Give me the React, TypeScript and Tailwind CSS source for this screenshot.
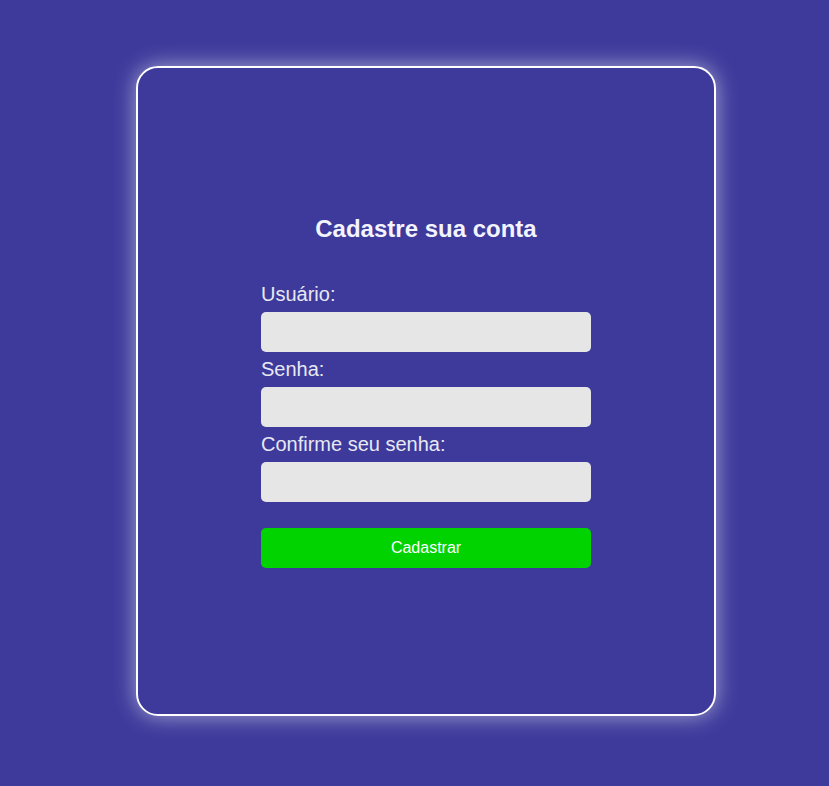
export default function App() {
  const fields = ['Usuário:', 'Senha:', 'Confirme seu senha:'];

  return (
    <div className="min-h-screen bg-[#3d3a9c] pt-[66px] pl-[136px] font-['Liberation_Sans',Arial,sans-serif]">
      <div className="w-[580px] h-[650px] border-2 border-white rounded-[22px] shadow-[0_0_22px_rgba(255,255,255,0.55)] flex flex-col items-center justify-center">
        <h2 className="text-[24px] leading-[28px] font-bold text-[#f4f4ff] mb-[40px]">Cadastre sua conta</h2>
        <form className="w-[330px] flex flex-col" onSubmit={(e) => e.preventDefault()}>
          {fields.map((label, i) => (
            <div key={label} className={`flex flex-col ${i > 0 ? 'mt-[6px]' : ''}`}>
              <label className="text-[20px] leading-[23px] text-[#e8e8f2]">{label}</label>
              <input
                type={i === 0 ? 'text' : 'password'}
                className="mt-[6px] h-[40px] w-full rounded-[5px] bg-[#e6e6e6] outline-none px-2"
              />
            </div>
          ))}
          <button
            type="submit"
            className="mt-[26px] h-[40px] w-full rounded-[5px] bg-[#00d300] text-white text-[16px]"
          >
            Cadastrar
          </button>
        </form>
      </div>
    </div>
  );
}
